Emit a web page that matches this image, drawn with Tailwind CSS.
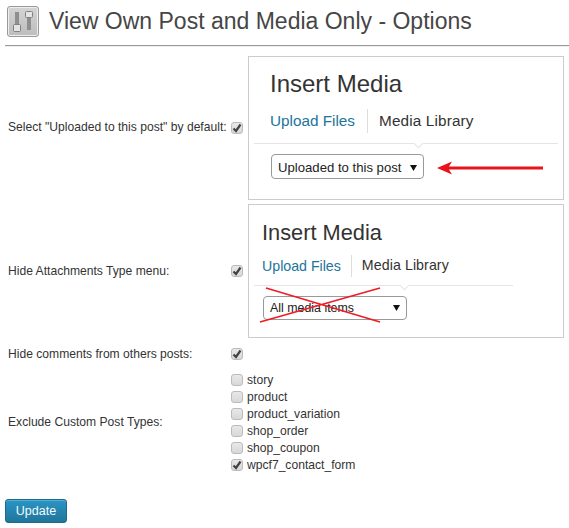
<!DOCTYPE html>
<html>
<head>
<meta charset="utf-8">
<title>View Own Post and Media Only - Options</title>
<script src="https://cdn.jsdelivr.net/npm/@tailwindcss/browser@4"></script>
</head>
<body class="bg-white font-['Liberation_Sans',Arial,sans-serif] text-[12.12px] text-[#333] w-[569px] h-[528px] overflow-hidden">
  <div class="pl-[5px]">
    <!-- page title -->
    <div class="flex items-start h-[46px] border-b border-[#999] shadow-[0_1px_0_#eee]">
      <div class="mt-[6px] ml-[2px] w-[32px] h-[31px] rounded-[3px] border border-[#999] shadow-[inset_0_0_0_1px_#eee] bg-gradient-to-b from-[#d4d4d4] to-[#bdbdbd]">
        <svg width="30" height="29" viewBox="0 0 30 29">
          <rect x="7" y="5" width="4" height="20" fill="#8f8f8f"/>
          <rect x="5.5" y="17.5" width="7" height="7" rx="1" fill="#e4e4e4" stroke="#808080"/>
          <rect x="19" y="4" width="4" height="19" fill="#8f8f8f"/>
          <rect x="17.5" y="4.5" width="7" height="6" rx="1" fill="#e4e4e4" stroke="#808080"/>
        </svg>
      </div>
      <h2 class="ml-[10px] mt-[6px] text-[23px] leading-[30px] text-[#464646]">View Own Post and Media Only - Options</h2>
    </div>

    <!-- row 1 -->
    <div class="flex items-center mt-[10px] h-[144px]">
      <div class="flex items-center w-[243px] pl-[3px]">
        <span class="w-[223px] mb-[2px] whitespace-nowrap">Select "Uploaded to this post" by default:</span>
        <span class="w-[12px] h-[12px] rounded-[3px] border border-[#bbb] bg-gradient-to-b from-[#e8e8e8] to-[#d8d8d8] flex items-center justify-center">
          <svg width="10" height="10" viewBox="0 0 10 10"><path d="M1.5 5.5 L4 8 L8.5 1.5" fill="none" stroke="#444" stroke-width="2.2"/></svg>
        </span>
      </div>
      <div class="relative w-[316px] h-[144px] border border-[#ccc] bg-white">
        <div class="pl-[21px] pt-[11px] text-[24px] leading-[32px] text-[#333]">Insert Media</div>
        <div class="flex items-center pl-[21px] mt-[9px] h-[24px] text-[15.3px]">
          <span class="text-[#21759b] pr-[12px] h-[24px] leading-[24px] border-r border-[#ddd]">Upload Files</span>
          <span class="text-[#333] pl-[11px] tracking-[0.15px]">Media Library</span>
        </div>
        <div class="relative mx-[5px] mt-[10px] h-px bg-[#e5e5e5]">
          <span class="absolute left-[161px] top-[-3px] w-[7px] h-[7px] rotate-45 bg-white border-r border-b border-[#e5e5e5]"></span>
        </div>
        <div class="ml-[22px] mt-[10px] flex items-center justify-between w-[153px] h-[25px] pl-[6px] pr-[6px] pt-[2px] border border-[#999] rounded-[4px] text-[13.15px] text-[#222]">
          <span>Uploaded to this post</span>
          <svg width="7" height="6" viewBox="0 0 7 6"><path d="M0 0 H7 L3.5 6 Z" fill="#111"/></svg>
        </div>
        <svg class="absolute left-[188px] top-[101px]" width="108" height="20" viewBox="0 0 108 20">
          <path d="M0 10 L15 3.5 L12 8.5 L106 8.5 L106 11.5 L12 11.5 L15 16.5 Z" fill="#e8141c"/>
        </svg>
      </div>
    </div>

    <!-- row 2 -->
    <div class="flex items-center mt-[4px] h-[134px]">
      <div class="flex items-center w-[243px] pl-[3px]">
        <span class="w-[223px] whitespace-nowrap">Hide Attachments Type menu:</span>
        <span class="w-[12px] h-[12px] rounded-[3px] border border-[#bbb] bg-gradient-to-b from-[#e8e8e8] to-[#d8d8d8] flex items-center justify-center">
          <svg width="10" height="10" viewBox="0 0 10 10"><path d="M1.5 5.5 L4 8 L8.5 1.5" fill="none" stroke="#444" stroke-width="2.2"/></svg>
        </span>
      </div>
      <div class="relative w-[316px] h-[134px] border border-[#ccc] bg-white">
        <div class="pl-[13px] pt-[13px] text-[21.8px] leading-[30px] text-[#333]">Insert Media</div>
        <div class="flex items-center pl-[13px] mt-[7px] h-[22px] text-[14.2px]">
          <span class="text-[#21759b] pr-[10px] h-[22px] leading-[22px] border-r border-[#ddd]">Upload Files</span>
          <span class="text-[#333] pl-[10px] tracking-[0.08px]">Media Library</span>
        </div>
        <div class="relative ml-[5px] w-[259px] mt-[8px] h-px bg-[#e5e5e5]">
          <span class="absolute left-[147px] top-[-3px] w-[7px] h-[7px] rotate-45 bg-white border-r border-b border-[#e5e5e5]"></span>
        </div>
        <div class="ml-[14px] mt-[10px] flex items-center justify-between w-[144px] h-[24px] px-[6px] border border-[#999] rounded-[4px] text-[12.4px] text-[#222]">
          <span>All media items</span>
          <svg width="7" height="6" viewBox="0 0 7 6"><path d="M0 0 H7 L3.5 6 Z" fill="#111"/></svg>
        </div>
        <svg class="absolute left-[10px] top-[82px]" width="125" height="36" viewBox="0 0 125 36">
          <path d="M7 1 L121 35 M1 35 L121 1" fill="none" stroke="#f01c24" stroke-width="1.6"/>
        </svg>
      </div>
    </div>

    <!-- row 3 -->
    <div class="flex items-center mt-[8px] h-[17px] pl-[3px]">
      <span class="w-[223px] whitespace-nowrap">Hide comments from others posts:</span>
      <span class="mb-[2px] w-[12px] h-[12px] rounded-[3px] border border-[#bbb] bg-gradient-to-b from-[#e8e8e8] to-[#d8d8d8] flex items-center justify-center">
        <svg width="10" height="10" viewBox="0 0 10 10"><path d="M1.5 5.5 L4 8 L8.5 1.5" fill="none" stroke="#444" stroke-width="2.2"/></svg>
      </span>
    </div>

    <!-- row 4 -->
    <div class="flex items-center mt-[9px] pl-[3px]">
      <span class="w-[223px] mb-[2px] whitespace-nowrap">Exclude Custom Post Types:</span>
      <div class="flex flex-col">
        <label class="flex items-center h-[17px] gap-[4px]"><span class="mb-[2px] w-[12px] h-[12px] rounded-[3px] border border-[#bbb] bg-gradient-to-b from-[#e8e8e8] to-[#d8d8d8]"></span>story</label>
        <label class="flex items-center h-[17px] gap-[4px]"><span class="mb-[2px] w-[12px] h-[12px] rounded-[3px] border border-[#bbb] bg-gradient-to-b from-[#e8e8e8] to-[#d8d8d8]"></span>product</label>
        <label class="flex items-center h-[17px] gap-[4px]"><span class="mb-[2px] w-[12px] h-[12px] rounded-[3px] border border-[#bbb] bg-gradient-to-b from-[#e8e8e8] to-[#d8d8d8]"></span>product_variation</label>
        <label class="flex items-center h-[17px] gap-[4px]"><span class="mb-[2px] w-[12px] h-[12px] rounded-[3px] border border-[#bbb] bg-gradient-to-b from-[#e8e8e8] to-[#d8d8d8]"></span>shop_order</label>
        <label class="flex items-center h-[17px] gap-[4px]"><span class="mb-[2px] w-[12px] h-[12px] rounded-[3px] border border-[#bbb] bg-gradient-to-b from-[#e8e8e8] to-[#d8d8d8]"></span>shop_coupon</label>
        <label class="flex items-center h-[17px] gap-[4px]"><span class="mb-[2px] w-[12px] h-[12px] rounded-[3px] border border-[#bbb] bg-gradient-to-b from-[#e8e8e8] to-[#d8d8d8] flex items-center justify-center"><svg width="10" height="10" viewBox="0 0 10 10"><path d="M1.5 5.5 L4 8 L8.5 1.5" fill="none" stroke="#444" stroke-width="2.2"/></svg></span>wpcf7_contact_form</label>
      </div>
    </div>

    <button class="mt-[25px] block w-[62px] h-[24px] rounded-[3px] border border-[#1d6a8d] bg-gradient-to-b from-[#2a95c5] to-[#21759b] text-[#f4fafd] text-[12.5px] shadow-[inset_0_1px_0_rgba(120,200,230,0.5)]">Update</button>
  </div>
</body>
</html>
